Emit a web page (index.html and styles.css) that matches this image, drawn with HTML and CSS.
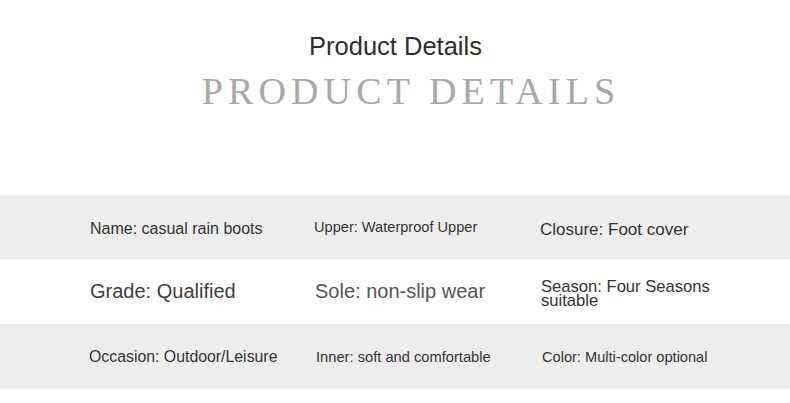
FILE: index.html
```html
<!DOCTYPE html>
<html>
<head>
<meta charset="utf-8">
<link rel="stylesheet" href="styles.css">
</head>
<body>
<div class="page">
  <header class="head">
    <h1 class="title">Product Details</h1>
    <div class="subtitle">PRODUCT DETAILS</div>
  </header>
  <section class="table">
    <div class="row gray">
      <div class="cell c1 s16 dn2">Name: casual rain boots</div>
      <div class="cell c2 s146 up-l">Upper: Waterproof Upper</div>
      <div class="cell c3 s17 dn3">Closure: Foot cover</div>
    </div>
    <div class="row">
      <div class="cell c1 s20 soft">Grade: Qualified</div>
      <div class="cell c2 s20 lighter">Sole: non-slip wear</div>
      <div class="cell c3 s166 tight dn2">Season: Four Seasons<br>suitable</div>
    </div>
    <div class="row gray">
      <div class="cell c1 s158 up-l">Occasion: Outdoor/Leisure</div>
      <div class="cell c2 s147 in-r">Inner: soft and comfortable</div>
      <div class="cell c3 s146">Color: Multi-color optional</div>
    </div>
  </section>
</div>
</body>
</html>
```

FILE: styles.css
```css
html, body {
  margin: 0;
  padding: 0;
  background: #ffffff;
}
.page {
  width: 790px;
  height: 403px;
  font-family: "Liberation Sans", Arial, sans-serif;
  color: #333333;
}
.head {
  display: flex;
  flex-direction: column;
  align-items: center;
  padding-top: 31px;
  height: 164px;
  box-sizing: border-box;
}
.title {
  margin: 0;
  font-weight: normal;
  font-size: 25.5px;
  line-height: 30px;
  color: #2e2e2e;
  padding-left: 1px;
}
.subtitle {
  margin-top: 8px;
  font-family: "Liberation Serif", "Times New Roman", serif;
  font-size: 38px;
  line-height: 44px;
  letter-spacing: 5.15px;
  color: #a9a9a9;
  padding-left: 32px;
}
.table {
  margin-top: 31px;
  display: flex;
  flex-direction: column;
}
.row {
  display: flex;
  align-items: center;
  height: 64px;
  padding-left: 90px;
}
.row + .row { height: 65px; }
.row.gray { background: #eeeeee; }
.cell { white-space: nowrap; }
.c1 { width: 225px; }
.c2 { width: 226px; }
.c3 { flex: 1; }
.s146 { font-size: 14.6px; }
.s147 { font-size: 14.7px; }
.s158 { font-size: 15.85px; }
.s16 { font-size: 16px; }
.s166 { font-size: 16.6px; }
.s17 { font-size: 17px; }
.s20 { font-size: 20px; }
.soft { color: #404040; }
.lighter { color: #555555; }
.tight { line-height: 14px; }
.dn2 { padding-top: 4px; }
.dn3 { padding-top: 6px; }
.up-l { margin-left: -1px; }
.in-r { margin-left: 2px; }
```
